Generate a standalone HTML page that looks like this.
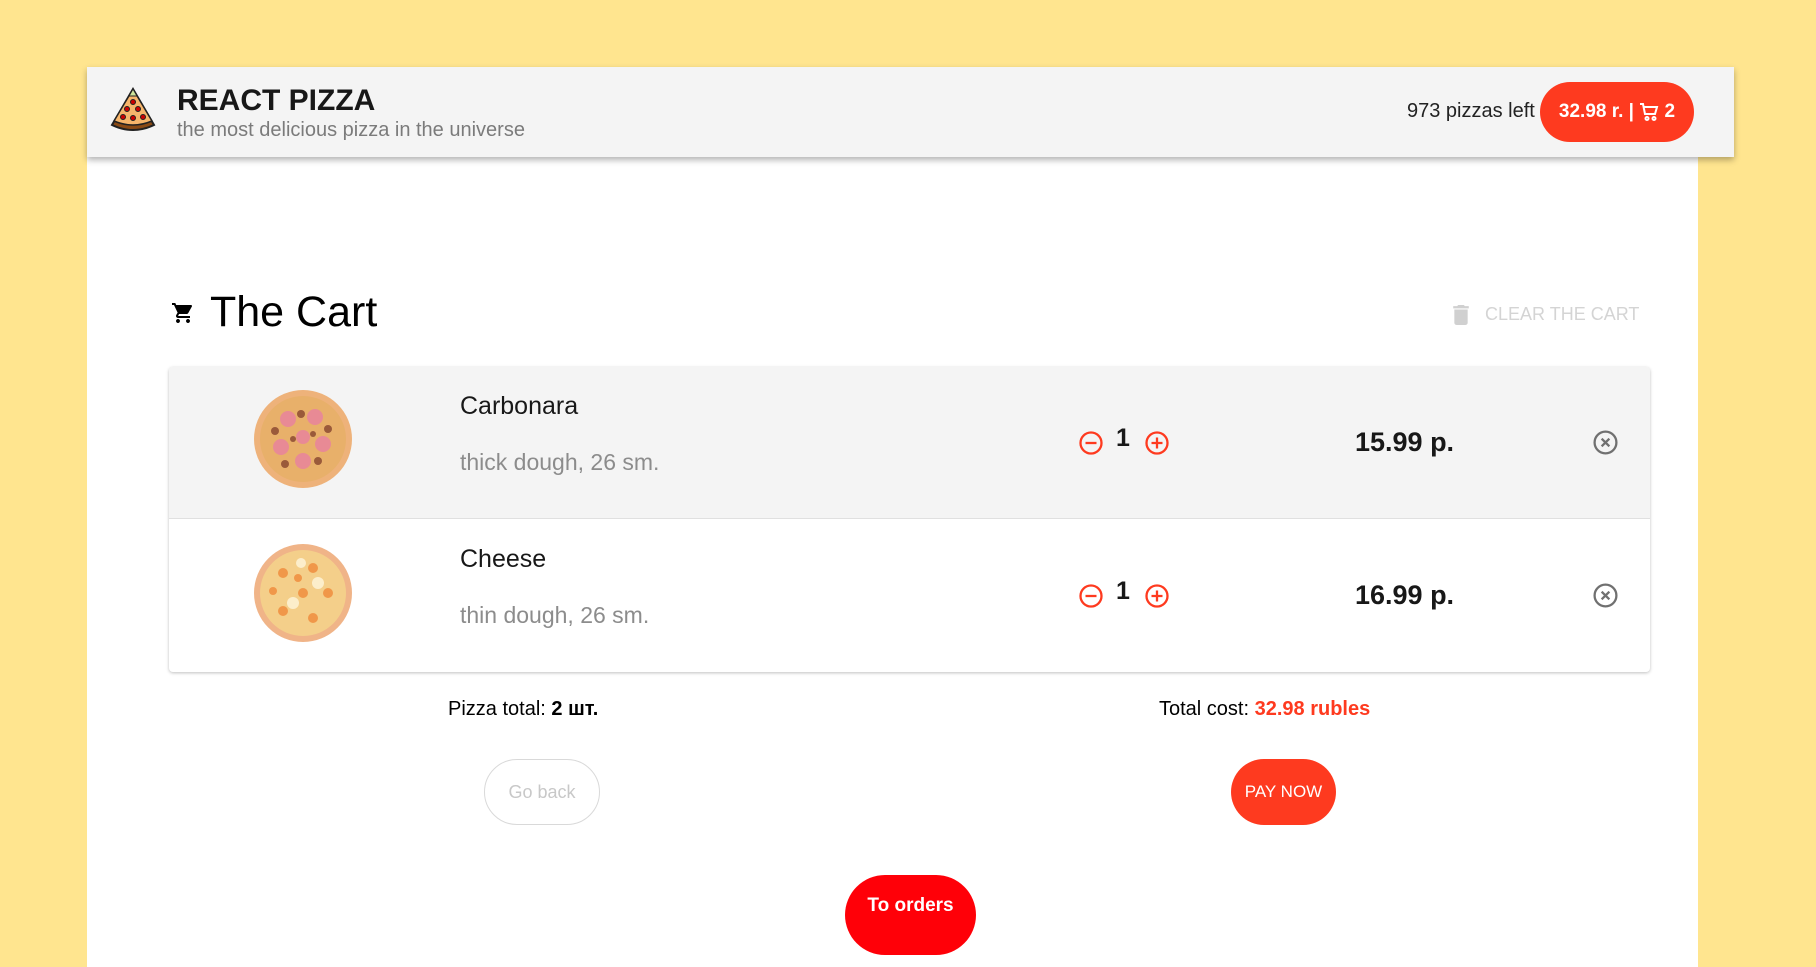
<!DOCTYPE html>
<html><head><meta charset="utf-8"><style>
*{box-sizing:border-box;margin:0;padding:0}
body{width:1816px;height:936px;overflow:hidden;background:#ffe58f;font-family:"Liberation Sans",sans-serif;position:relative}
.wrap{position:absolute;left:87px;top:67px;width:1611px;height:900px;background:#fff}
.header{position:absolute;left:87px;top:67px;width:1647px;height:90px;background:#f4f4f4;box-shadow:0 3px 6px rgba(0,0,0,.3)}
.abs{position:absolute;white-space:nowrap}
.row{position:absolute;left:169px;width:1481px;height:152px}
.btn{position:absolute;border-radius:40px;display:flex;align-items:center;justify-content:center}
</style></head><body>
<div class="wrap"></div>
<div class="header">
 <svg class="abs" style="left:21px;top:20px" width="50" height="48" viewBox="0 0 50 48">
  <path d="M25 2 L46 38 Q25 48 4 38 Z" fill="#8a4a14" stroke="#222" stroke-width="2"/>
  <path d="M25 2 L44 34 Q25 42 6 34 Z" fill="#f6b56b" stroke="#222" stroke-width="1.5"/>
  <path d="M25 2 L29 9 L21 9 Z" fill="#cde49a" stroke="#222" stroke-width="1"/>
  <g fill="#c00" stroke="#222" stroke-width="1"><circle cx="25" cy="15" r="2.5"/><circle cx="19" cy="22" r="2.5"/><circle cx="30" cy="22" r="2.5"/><circle cx="15" cy="30" r="2.5"/><circle cx="25" cy="31" r="2.5"/><circle cx="35" cy="30" r="2.5"/></g>
 </svg>
 <div class="abs" style="left:90px;top:17px;font-size:30px;font-weight:bold;color:#181818">REACT PIZZA</div>
 <div class="abs" style="left:90px;top:52px;font-size:20px;color:#7b7b7b">the most delicious pizza in the universe</div>
 <div class="abs" style="left:1320px;top:33px;font-size:20px;color:#222">973 pizzas left</div>
 <div class="btn" style="left:1453px;top:15px;width:154px;height:60px;background:#fe3a1f;color:#fff;font-weight:bold;font-size:19px">32.98 r. |&nbsp;
  <svg width="20" height="20" viewBox="0 0 20 20" fill="none" stroke="#fff" stroke-width="2"><path d="M1 2h3l2 10h10l2-7H5"/><circle cx="8" cy="16.5" r="1.5"/><circle cx="15" cy="16.5" r="1.5"/></svg>&nbsp;2</div>
</div>

<svg class="abs" style="left:171px;top:301px" width="24" height="24" viewBox="0 0 24 24"><path fill="#000" d="M7 18c-1.1 0-2 .9-2 2s.9 2 2 2 2-.9 2-2-.9-2-2-2zM1 2v2h2l3.6 7.59-1.35 2.45C4.52 15.37 5.48 17 7 17h12v-2H7.42c-.14 0-.25-.11-.25-.25l.03-.12.9-1.63h7.45c.75 0 1.41-.41 1.75-1.03l3.58-6.49A1 1 0 0 0 20 4H5.21l-.94-2H1zm16 16c-1.1 0-2 .9-2 2s.9 2 2 2 2-.9 2-2-.9-2-2-2z"/></svg>
<div class="abs" style="left:210px;top:288px;font-size:43px;color:#000">The Cart</div>
<svg class="abs" style="left:1452px;top:305px" width="18" height="20" viewBox="0 0 14 18"><path fill="#d0d0d0" d="M1 16c0 1.1.9 2 2 2h8c1.1 0 2-.9 2-2V4H1v12zM14 1h-3.5l-1-1h-5l-1 1H0v2h14V1z"/></svg>
<div class="abs" style="left:1485px;top:304px;font-size:18px;color:#d4d4d4">CLEAR THE CART</div>

<div style="position:absolute;left:169px;top:367px;width:1481px;height:305px;border-radius:4px;box-shadow:0 1px 3px rgba(0,0,0,.25);background:#fff"></div>
<div class="row" style="top:367px;background:#f4f4f4;border-bottom:1px solid #e0e0e0;border-radius:4px 4px 0 0"></div>

<svg class="abs" style="left:253px;top:389px" width="100" height="100" viewBox="0 0 100 100">
 <circle cx="50" cy="50" r="49" fill="#eeb27a"/><circle cx="50" cy="50" r="43" fill="#e8b06a"/>
 <g fill="#e88a95"><circle cx="35" cy="30" r="8"/><circle cx="62" cy="28" r="8"/><circle cx="70" cy="55" r="8"/><circle cx="50" cy="72" r="8"/><circle cx="28" cy="58" r="8"/><circle cx="50" cy="48" r="7"/></g>
 <g fill="#9a5a3a"><circle cx="48" cy="25" r="4"/><circle cx="75" cy="40" r="4"/><circle cx="65" cy="72" r="4"/><circle cx="32" cy="75" r="4"/><circle cx="22" cy="42" r="4"/><circle cx="40" cy="50" r="3"/><circle cx="60" cy="45" r="3"/></g>
</svg>
<svg class="abs" style="left:253px;top:543px" width="100" height="100" viewBox="0 0 100 100">
 <circle cx="50" cy="50" r="49" fill="#f0b488"/><circle cx="50" cy="50" r="43" fill="#f4cf8a"/>
 <g fill="#f08a3a" opacity=".8"><circle cx="30" cy="30" r="5"/><circle cx="60" cy="25" r="5"/><circle cx="75" cy="50" r="5"/><circle cx="60" cy="75" r="5"/><circle cx="30" cy="68" r="5"/><circle cx="50" cy="50" r="5"/><circle cx="20" cy="48" r="4"/><circle cx="45" cy="35" r="4"/></g>
 <g fill="#fff6dc" opacity=".8"><circle cx="40" cy="60" r="6"/><circle cx="65" cy="40" r="6"/><circle cx="48" cy="20" r="5"/></g>
</svg>

<div class="abs" style="left:460px;top:392px;font-size:25px;color:#181818">Carbonara</div>
<div class="abs" style="left:460px;top:449px;font-size:23px;color:#8c8c8c">thick dough, 26 sm.</div>
<div class="abs" style="left:460px;top:545px;font-size:25px;color:#181818">Cheese</div>
<div class="abs" style="left:460px;top:602px;font-size:23px;color:#8c8c8c">thin dough, 26 sm.</div>

<svg class="abs" style="left:1078px;top:430px" width="26" height="26" viewBox="0 0 26 26" fill="none" stroke="#fe3a1f" stroke-width="2.3"><circle cx="13" cy="13" r="10.5"/><path d="M7.5 13h11"/></svg>
<div class="abs" style="left:1116px;top:424px;font-size:25px;font-weight:bold;color:#181818">1</div>
<svg class="abs" style="left:1144px;top:430px" width="26" height="26" viewBox="0 0 26 26" fill="none" stroke="#fe3a1f" stroke-width="2.3"><circle cx="13" cy="13" r="10.5"/><path d="M7.5 13h11M13 7.5v11"/></svg>
<div class="abs" style="left:1355px;top:427px;font-size:27px;font-weight:bold;color:#181818">15.99 p.</div>
<svg class="abs" style="left:1592px;top:429px" width="27" height="27" viewBox="0 0 26 26" fill="none" stroke="#707070" stroke-width="2.2"><circle cx="13" cy="13" r="10.5"/><path d="M9.3 9.3l7.4 7.4M16.7 9.3l-7.4 7.4"/></svg>
<svg class="abs" style="left:1078px;top:583px" width="26" height="26" viewBox="0 0 26 26" fill="none" stroke="#fe3a1f" stroke-width="2.3"><circle cx="13" cy="13" r="10.5"/><path d="M7.5 13h11"/></svg>
<div class="abs" style="left:1116px;top:577px;font-size:25px;font-weight:bold;color:#181818">1</div>
<svg class="abs" style="left:1144px;top:583px" width="26" height="26" viewBox="0 0 26 26" fill="none" stroke="#fe3a1f" stroke-width="2.3"><circle cx="13" cy="13" r="10.5"/><path d="M7.5 13h11M13 7.5v11"/></svg>
<div class="abs" style="left:1355px;top:580px;font-size:27px;font-weight:bold;color:#181818">16.99 p.</div>
<svg class="abs" style="left:1592px;top:582px" width="27" height="27" viewBox="0 0 26 26" fill="none" stroke="#707070" stroke-width="2.2"><circle cx="13" cy="13" r="10.5"/><path d="M9.3 9.3l7.4 7.4M16.7 9.3l-7.4 7.4"/></svg>

<div class="abs" style="left:448px;top:698px;font-size:20px;color:#000">Pizza total: <b>2 шт.</b></div>
<div class="abs" style="left:1159px;top:698px;font-size:20px;color:#000">Total cost: <b style="color:#fe3a1f">32.98 rubles</b></div>

<div class="btn" style="left:484px;top:759px;width:116px;height:66px;border:1px solid #d9d9d9;color:#c8c8c8;font-size:18px">Go back</div>
<div class="btn" style="left:1231px;top:759px;width:105px;height:66px;background:#fe3a1f;color:#fff;font-size:17px">PAY NOW</div>
<div class="btn" style="left:845px;top:875px;width:131px;height:80px;background:#ff0008;color:#fff;font-size:19px;font-weight:bold;align-items:flex-start;padding-top:20px">To orders</div>
</body></html>
